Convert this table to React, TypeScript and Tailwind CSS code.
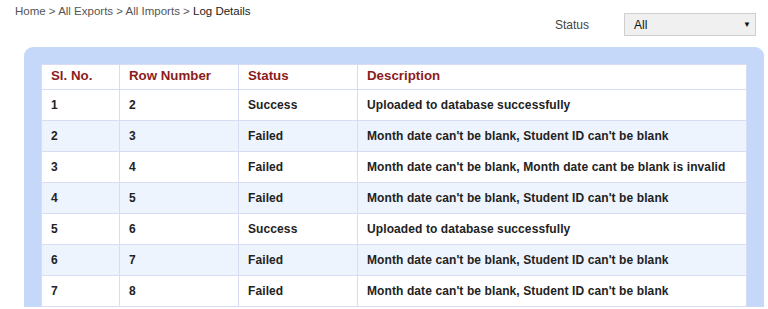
import React from "react";

const rows: [string, string, string, string][] = [
  ["1", "2", "Success", "Uploaded to database successfully"],
  ["2", "3", "Failed", "Month date can't be blank, Student ID can't be blank"],
  ["3", "4", "Failed", "Month date can't be blank, Month date cant be blank is invalid"],
  ["4", "5", "Failed", "Month date can't be blank, Student ID can't be blank"],
  ["5", "6", "Success", "Uploaded to database successfully"],
  ["6", "7", "Failed", "Month date can't be blank, Student ID can't be blank"],
  ["7", "8", "Failed", "Month date can't be blank, Student ID can't be blank"],
];

export default function App() {
  return (
    <div className="w-[768px] h-[309px] overflow-hidden bg-white font-['Liberation_Sans',Arial,sans-serif]">
      <div className="flex items-start justify-between h-[47px]">
        <div className="pl-[15px] pt-[4px] text-[11.5px] leading-[15px] text-[#555]">
          Home &gt; All Exports &gt; All Imports &gt; <span className="text-[#222]">Log Details</span>
        </div>
        <div className="flex items-center mt-[13px] mr-[12px]">
          <span className="text-[12px] text-[#444] mr-[35px]">Status</span>
          <div className="w-[132px] h-[23px] border border-[#cfcfcf] bg-[#f0f0f0] flex items-center justify-between pl-[9px] pr-[4px] text-[12px] text-[#111]">
            <span>All</span>
            <span className="text-[8px]">▼</span>
          </div>
        </div>
      </div>
      <div className="ml-[24px] mr-[4px] bg-[#c6d8fa] rounded-t-[9px] pt-[17px] px-[17px]">
        <table className="w-full table-fixed border-collapse bg-white">
          <colgroup>
            <col className="w-[78px]" />
            <col className="w-[119px]" />
            <col className="w-[119px]" />
            <col />
          </colgroup>
          <thead>
            <tr className="h-[25px]">
              {["Sl. No.", "Row Number", "Status", "Description"].map((h) => (
                <th
                  key={h}
                  className="border border-[#d8ddf4] text-left pl-[9px] text-[13.3px] font-bold text-[#8b1c1c] leading-[16px] pb-[2px]"
                >
                  {h}
                </th>
              ))}
            </tr>
          </thead>
          <tbody>
            {rows.map((r, i) => (
              <tr key={i} className={`h-[31px] ${i % 2 === 1 ? "bg-[#eef4fd]" : "bg-white"}`}>
                {r.map((c, j) => (
                  <td
                    key={j}
                    className="border border-[#d8ddf4] pl-[9px] text-[12px] tracking-[0.1px] font-bold text-[#222] whitespace-nowrap"
                  >
                    {c}
                  </td>
                ))}
              </tr>
            ))}
          </tbody>
        </table>
      </div>
    </div>
  );
}
